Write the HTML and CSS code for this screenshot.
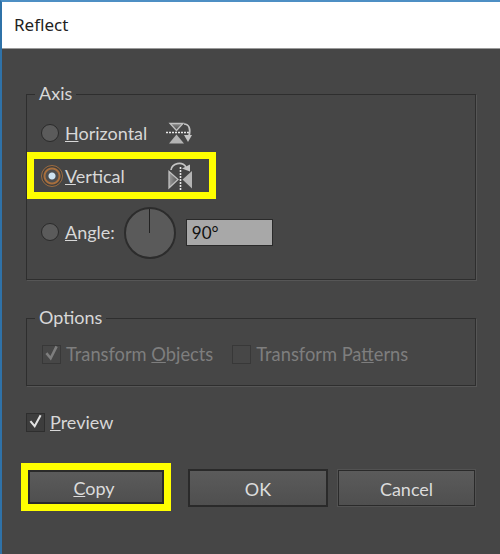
FILE: index.html
```html
<!DOCTYPE html>
<html lang="en">
<head>
<meta charset="utf-8">
<title>Reflect</title>
<link rel="stylesheet" href="styles.css">
</head>
<body>
<div class="dialog">
  <header class="titlebar">Reflect</header>
  <main class="content">
    <fieldset class="group axis">
      <legend>Axis</legend>
      <div class="row row-horizontal">
        <span class="radio"></span>
        <span class="label label-wide"><u>H</u>orizontal</span>
        <svg class="axis-icon" width="27" height="23" viewBox="0 0 27 23">
          <defs>
            <linearGradient id="fade-h" x1="0" y1="0" x2="0" y2="1"><stop offset="0" stop-color="#8a8a8a"/><stop offset="1" stop-color="#4c4c4c"/></linearGradient>
            <linearGradient id="fade-v" x1="0" y1="0" x2="1" y2="0"><stop offset="0" stop-color="#9a9a9a"/><stop offset="1" stop-color="#555"/></linearGradient>
          </defs>
          <path d="M4 1.500h13l-6.500 7z" fill="url(#fade-h)" stroke="#c0c0c0" stroke-width="1.300"/>
          <path d="M3 21.500h15l-7.500-9z" fill="#b4b4b4"/>
          <path d="M0 10.500h23" stroke="#e8e8e8" stroke-width="1.600" stroke-dasharray="2 1"/>
          <path d="M18 2c5 0 7 5 5 12" fill="none" stroke="#c4c4c4" stroke-width="1.700"/>
          <path d="M18 13h8l-4 7z" fill="#c4c4c4"/>
        </svg>
      </div>
      <div class="row row-vertical">
        <span class="radio radio-on"></span>
        <span class="label label-wide"><u>V</u>ertical</span>
        <svg class="axis-icon" width="25" height="29" viewBox="0 0 25 29">
          <path d="M1 10.500l9 8-9 8.500z" fill="url(#fade-v)" stroke="#c0c0c0" stroke-width="1.300"/>
          <path d="M24 10l-9.500 8.500 9.500 9z" fill="#b4b4b4"/>
          <path d="M12.500 6v23" stroke="#e8e8e8" stroke-width="1.600" stroke-dasharray="2 1"/>
          <path d="M3 9c1-7 11-9 15-3" fill="none" stroke="#c4c4c4" stroke-width="1.700"/>
          <path d="M14 7.500l8-4v7z" fill="#c4c4c4"/>
        </svg>
      </div>
      <div class="row row-angle">
        <span class="radio"></span>
        <span class="label"><u>A</u>ngle:</span>
        <span class="dial"><span class="dial-hand"></span></span>
        <span class="angle-input">90°</span>
      </div>
    </fieldset>
    <fieldset class="group options">
      <legend>Options</legend>
      <div class="row row-options">
        <span class="check">
          <svg width="20" height="20" viewBox="0 0 20 20"><path d="M4 9l5 6 7-14" fill="none" stroke="#7e7e7e" stroke-width="3"/></svg>
        </span>
        <span class="label muted">Transform <u>O</u>bjects</span>
        <span class="check check-second"></span>
        <span class="label muted">Transform Pa<u>t</u>terns</span>
      </div>
    </fieldset>
    <div class="preview">
      <span class="check check-light">
        <svg width="20" height="20" viewBox="0 0 20 20"><path d="M4 9l5 6 7-13" fill="none" stroke="#e2e2e2" stroke-width="2.400"/></svg>
      </span>
      <span class="label label-preview"><u>P</u>review</span>
    </div>
    <div class="actions">
      <span class="copy-mark"><button class="btn btn-copy" type="button"><u>C</u>opy</button></span>
      <button class="btn btn-ok" type="button">OK</button>
      <button class="btn btn-cancel" type="button">Cancel</button>
    </div>
  </main>
</div>
</body>
</html>
```

FILE: styles.css
```css
* { box-sizing: border-box; }
html, body { margin: 0; padding: 0; }
body {
  width: 500px;
  height: 554px;
  overflow: hidden;
  background: #464646;
  font-family: "Lato", "Open Sans", sans-serif;
}
.dialog {
  width: 500px;
  height: 554px;
  border-top: 2px solid #4d8fc4;
  border-left: 2px solid #2f72a8;
  display: flex;
  flex-direction: column;
}
.titlebar {
  height: 47px;
  flex: none;
  background: #fff;
  color: #222;
  font-size: 17px;
  padding: 13px 0 0 12px;
  line-height: 20px;
  border-bottom: 1px solid #9a9a9a;
  font-family: "Noto Sans", sans-serif;
}
.content {
  flex: 1;
  padding: 33px 24px 0 24px;
  display: flex;
  flex-direction: column;
}
.group {
  margin: 0;
  padding: 0;
  border: 1px solid #2e2e2e;
  min-width: 0;
  box-shadow: 1px 1px 0 #565656;
}
.group legend {
  margin-left: 8px;
  padding: 0 4px 2px;
  font-size: 18px;
  line-height: 22px;
  color: #d8d8d8;
}
.axis { height: 198px; }
.options { height: 80px; margin-top: 26px; }
.row { display: flex; align-items: center; }
.row-horizontal { height: 36px; margin-top: 9px; padding-left: 14px; }
.row-vertical {
  width: 189px;
  height: 47px;
  margin-top: 1px;
  padding-left: 7px;
  border: 7px solid #ffff00;
  background: #454545;
}
.row-angle { height: 52px; margin-top: 7px; padding-left: 14px; }
.row-options { height: 32px; margin-top: 8px; padding-left: 15px; }
.radio {
  width: 18px;
  height: 18px;
  flex: none;
  border-radius: 50%;
  background: #5b5b5b;
  border: 1px solid #2a2a2a;
}
.radio-on {
  width: 22px;
  height: 22px;
  background: radial-gradient(circle, #cfe4f2 0 3px, #4e4e4e 4px 6px, #a86f3d 7px 8px, #3e3e3e 9px);
  border: 1px solid #9d6c40;
}
.label {
  margin-left: 6px;
  font-size: 18px;
  line-height: 24px;
  color: #d8d8d8;
  white-space: nowrap;
}
.label-wide { width: 102px; }
.row-horizontal .label-wide { width: 101px; }
.row-vertical .label-wide { margin-left: 2px; width: 103px; }
.label-preview { margin-left: 5px; }
.axis-icon { flex: none; }
.dial {
  width: 52px;
  height: 52px;
  flex: none;
  margin-left: 9px;
  margin-top: 2px;
  border-radius: 50%;
  background: #5a5a5a;
  border: 2px solid #2c2c2c;
  display: flex;
  justify-content: center;
}
.dial-hand {
  width: 1px;
  height: 24px;
  background: #222;
}
.angle-input {
  width: 87px;
  height: 27px;
  margin-left: 10px;
  padding-left: 5px;
  background: #a8a8a8;
  border: 1px solid #2a2a2a;
  color: #111;
  font-size: 17px;
  line-height: 25px;
}
.check {
  width: 19px;
  height: 19px;
  flex: none;
  background: #474747;
  border: 1px solid #383838;
  display: flex;
  align-items: center;
  justify-content: center;
}
.check-second { margin-left: 19px; }
.muted { color: #7e7e7e; margin-left: 5px; font-size: 18.300px; }
.preview {
  display: flex;
  align-items: center;
  height: 24px;
  margin-top: 24px;
}
.check-light { border-color: #2e2e2e; background: #3d3d3d; }
.actions {
  display: flex;
  align-items: center;
  margin-top: 29px;
  margin-left: -5px;
}
.copy-mark {
  display: block;
  flex: none;
  border: 7px solid #ffff00;
  width: 150px;
  height: 48px;
}
.btn {
  display: block;
  font-family: inherit;
  font-size: 18px;
  color: #dcdcdc;
  padding: 2px 0 0;
  background: linear-gradient(#5b5b5b, #4f4f4f);
  border: 1px solid #2a2a2a;
}
.btn-copy { width: 100%; height: 100%; border-width: 2px; padding-right: 4px; }
.btn-ok {
  width: 140px;
  height: 38px;
  margin-left: 17px;
  margin-top: 2px;
  border-width: 2px;
}
.btn-cancel {
  width: 137px;
  height: 36px;
  margin-left: 10px;
  margin-top: 2px;
  box-shadow: 0 0 0 1px #525252;
}
```
